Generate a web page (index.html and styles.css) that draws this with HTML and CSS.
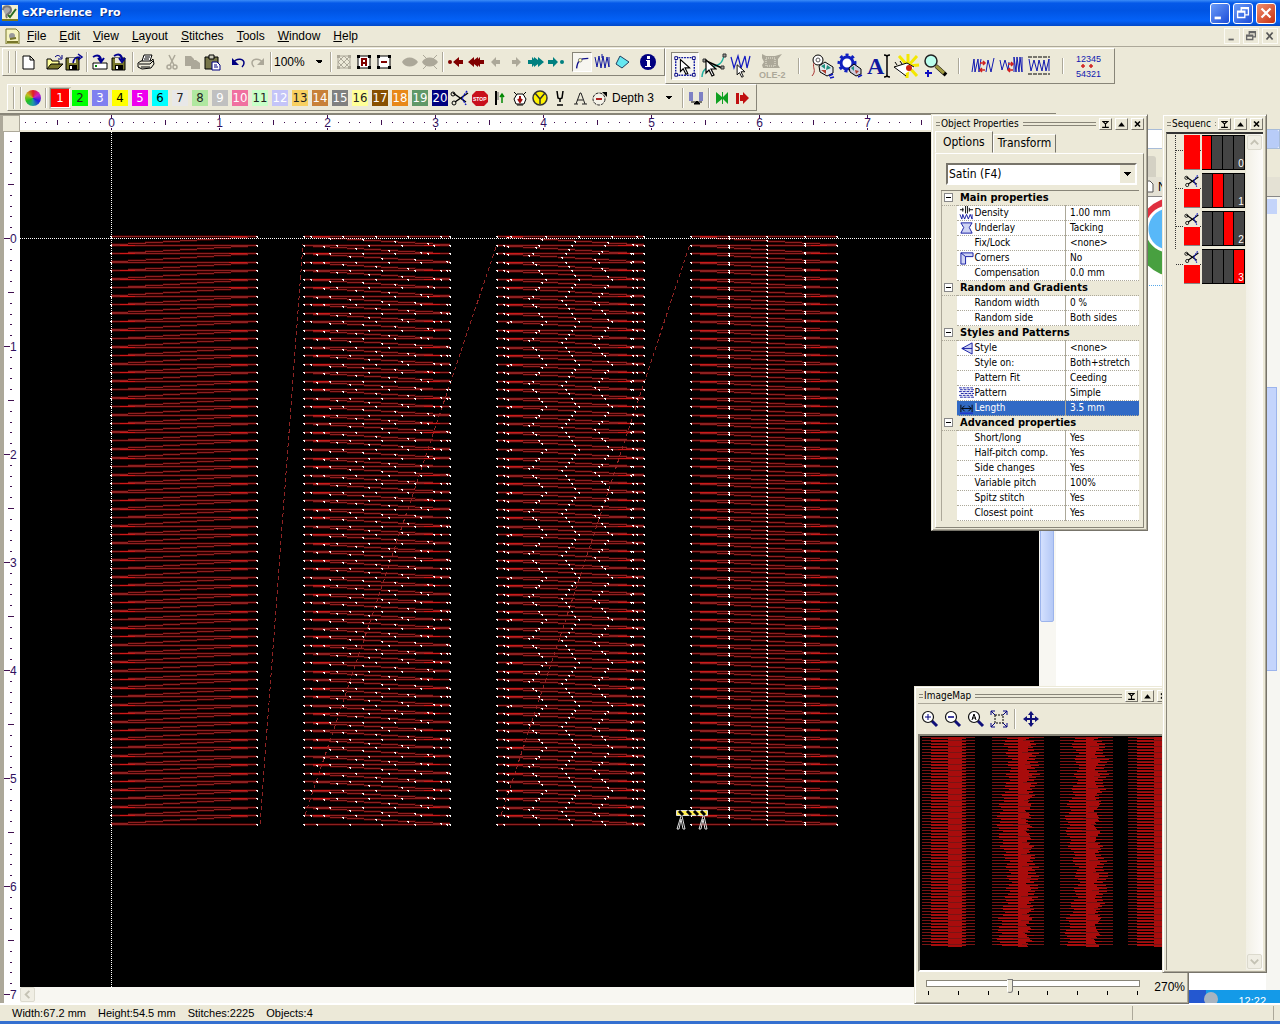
FILE: index.html
```
<!DOCTYPE html>
<html lang="en">
<head>
<meta charset="utf-8">
<title>eXPerience Pro</title>
<link rel="stylesheet" href="styles.css">
</head>
<body>
<svg class="defs" aria-hidden="true">
  <defs>
    <symbol id="disk" viewBox="0 0 20 20"><path d="M2 6h13v12H2z" fill="#77762a" stroke="#000"/><path d="M5 6h7v5H5z" fill="#ece9d8"/><path d="M5 13h8v5H5z" fill="#000"/><path d="M6 14h2v3H6z" fill="#fff"/></symbol>
    <symbol id="scissors" viewBox="0 0 20 20"><g fill="none" stroke="currentColor"><path d="M3 5l13 9M5 14L18 5" stroke-width="1.500"/><circle cx="3" cy="6" r="2"/><circle cx="4" cy="15" r="2"/></g><path d="M17 3l-5 7 4 7" stroke="#1018c0" fill="none" stroke-width="1.500" stroke-dasharray="2 1"/></symbol>
    <symbol id="glass" viewBox="0 0 20 20"><path d="M11 11l6 6" stroke="#10107a" stroke-width="3"/><circle cx="8" cy="8" r="5.500" fill="#fff" stroke="#111" stroke-width="1.200"/></symbol>
    <symbol id="cursor" viewBox="0 0 12 18"><path d="M1 1v13l3-3 3 6 2-1-3-6h5z" fill="#fff" stroke="#000" stroke-width="1.200"/></symbol>
    <symbol id="pin" viewBox="0 0 12 12"><path d="M2 3h8M2 10h8M3 3l3 3 3-3M6 6v4" stroke="#000" fill="none" stroke-width="1.300"/></symbol>
    <symbol id="up" viewBox="0 0 12 12"><path d="M2 9h8L6 4z"/></symbol>
    <symbol id="x" viewBox="0 0 12 12"><path d="M3 3l6 6M9 3l-6 6" stroke="#000" stroke-width="2"/></symbol>
    <symbol id="arrow" viewBox="0 0 20 20"><path d="M5 10l5-5v3h4v4h-4v3z" fill="currentColor"/></symbol>
    <symbol id="rewind" viewBox="0 0 20 20"><path d="M2 10l6-5v3l4-3v3h5v4h-5v3l-4-3v3z" fill="currentColor"/><path d="M9 10l5-5v3h4v4h-4v3z" fill="currentColor"/></symbol>
    <symbol id="end" viewBox="0 0 20 20"><path d="M7 10l6-5v3h4v4h-4v3z" fill="currentColor"/><circle cx="4" cy="10" r="2" fill="currentColor"/></symbol>
  </defs>
</svg>
<div class="app">
  <header class="titlebar">
    <svg class="ico16" viewBox="0 0 16 16"><path d="M0 0h16v16H0z" fill="#f2f0d0"/><path d="M1 5c0-5 8-5 8 0s-7 3-4 8" fill="#aaa" stroke="#777" stroke-width="2"/><path d="M6 10l2 2 6-8" stroke="#286a20" stroke-width="2" fill="none"/><path d="M0 15h16" stroke="#777720" stroke-width="2"/></svg>
    <h1>eXPerience&nbsp; Pro</h1>
    <div class="winbtns">
      <button aria-label="Minimize"><svg viewBox="0 0 20 20"><path d="M4 14h7v3H4z" fill="#fff"/></svg></button>
      <button aria-label="Restore"><svg viewBox="0 0 20 20" fill="none" stroke="#fff"><path d="M8 8V4h8v8h-4M8 5h8M4 8h8v7H4zM4 9h8" stroke-width="1.500"/></svg></button>
      <button class="close" aria-label="Close"><svg viewBox="0 0 20 20"><path d="M5 5l10 10M15 5L5 15" stroke="#fff" stroke-width="2.500"/></svg></button>
    </div>
  </header>
  <nav class="menubar">
    <svg class="ico16" viewBox="0 0 16 16"><path d="M2 1h10l3 3v12H2z" fill="#f6f4c0" stroke="#77762a"/><circle cx="8" cy="8" r="3" fill="#999"/><path d="M6 11l6-1M3 14h11" stroke="#77762a" stroke-width="2"/></svg>
    <a href="#"><u>F</u>ile</a><a href="#"><u>E</u>dit</a><a href="#"><u>V</u>iew</a><a href="#"><u>L</u>ayout</a><a href="#"><u>S</u>titches</a><a href="#"><u>T</u>ools</a><a href="#"><u>W</u>indow</a><a href="#"><u>H</u>elp</a>
    <div class="mdi">
      <button aria-label="Minimize document"><svg viewBox="0 0 16 16"><path d="M4 11h6v2H4z" fill="#666"/></svg></button>
      <button aria-label="Restore document"><svg viewBox="0 0 16 16"><path d="M6 6V3h7v6h-3M6 4h7M3 7h7v5H3zM3 8h7" fill="none" stroke="#666" stroke-width="1.500"/></svg></button>
      <button aria-label="Close document"><svg viewBox="0 0 16 16"><path d="M4 4l7 8M11 4l-7 8" stroke="#555" stroke-width="2"/></svg></button>
    </div>
  </nav>
  <div class="dock">
    <div class="toolbar main">
      <i class="grip"></i>
      <button aria-label="New"><svg viewBox="0 0 20 20"><path d="M5 4h7l4 4v9H5zM12 4v4h4" fill="#fff" stroke="#000"/></svg></button><i class="gap"></i>
      <button aria-label="Open"><svg viewBox="0 0 20 20"><path d="M3 17V7h4l1 2h7v3" fill="#ffff9a" stroke="#000"/><path d="M3 17l4-5h12l-5 5z" fill="#77762a" stroke="#000"/><path d="M11 5c3-3 5-1 6 1M18 3v4h-4" fill="none" stroke="#000080"/></svg></button>
      <button aria-label="Save"><svg viewBox="0 0 20 20"><use href="#disk" width="20" height="20"/><path d="M9 11c1-5 3-6 7-6M14 2l4 3-4 3" fill="none" stroke="#000090" stroke-width="1.500"/></svg></button><i class="sep"></i>
      <button aria-label="Import"><svg viewBox="0 0 20 20"><path d="M3 11h14v6H3z" fill="#fff" stroke="#000"/><path d="M5 13h2v2H5z" fill="#080"/><path d="M3 5c5-3 8-1 8 4M8 6l3 4 3-4" fill="none" stroke="#000090" stroke-width="2"/></svg></button>
      <button aria-label="Export"><svg viewBox="0 0 20 20"><use href="#disk" width="20" height="20"/><path d="M4 4c5-3 8-1 8 4M9 6l3 4 3-4" fill="none" stroke="#000090" stroke-width="2"/></svg></button><i class="sep"></i>
      <button aria-label="Print"><svg viewBox="0 0 20 20"><path d="M6 9l2-6h8l-2 6" fill="#fff" stroke="#000"/><path d="M2 11l3-2h10l2-2 1 5-3 4-9 1-4-2z" fill="#ece9d8" stroke="#000"/><path d="M3 12h11l3-3M5 15h9M9 5h5M8 7h5" fill="none" stroke="#000"/></svg></button><i class="gap"></i>
      <button aria-label="Cut" class="off"><svg viewBox="0 0 20 20"><path d="M7 3l5 10M13 3L8 13" stroke="currentColor" stroke-width="1.500"/><g fill="none" stroke="currentColor" stroke-width="1.500"><circle cx="7" cy="15" r="2"/><circle cx="13" cy="15" r="2"/></g></svg></button>
      <button aria-label="Copy" class="off"><svg viewBox="0 0 20 20" fill="currentColor"><path d="M3 4h6l3 3v7H3z"/><path d="M9 8h5l4 3v6H9z"/></svg></button>
      <button aria-label="Paste"><svg viewBox="0 0 20 20"><path d="M3 5h13v12H3z" fill="#77764a" stroke="#000"/><path d="M7 3h5v4H7z" fill="#ccb" stroke="#000"/><path d="M10 10h5l3 3v5h-8z" fill="#fff" stroke="#000080"/><path d="M12 13h3M12 15h4" stroke="#000080"/></svg></button><i class="gap"></i>
      <button aria-label="Undo"><svg viewBox="0 0 20 20"><path d="M5 11c4-6 11-4 11 0 0 2-1 3-2 4" fill="none" stroke="#000080" stroke-width="1.500"/><path d="M4 6v7h7z" fill="#000080"/></svg></button>
      <button aria-label="Redo" class="off"><svg viewBox="0 0 20 20"><path d="M15 11C11 5 4 7 4 11c0 2 1 3 2 4" fill="none" stroke="currentColor" stroke-width="1.500"/><path d="M16 6v7H9z" fill="currentColor"/></svg></button><i class="sep"></i>
      <select class="zoom" aria-label="Zoom"><option>100%</option></select><i class="sep"></i>
      <button aria-label="Hide" class="off"><svg viewBox="0 0 20 20"><path d="M4 4h12v12H4zM4 4l12 12M16 4L4 16M10 4l6 6-6 6-6-6z" fill="none" stroke="currentColor"/><path d="M3 3h3v3H3zM14 3h3v3h-3zM3 14h3v3H3zM14 14h3v3h-3z" fill="currentColor"/></svg></button>
      <button aria-label="All"><svg viewBox="0 0 20 20"><path d="M4 4h12v12H4z" fill="#fff" stroke="#000"/><path d="M3 3h3v3H3zM14 3h3v3h-3zM3 14h3v3H3zM14 14h3v3h-3z"/><path d="M8 14V7h4v7M8 11h4" fill="none" stroke="#800000" stroke-width="2"/></svg></button>
      <button aria-label="Collapse"><svg viewBox="0 0 20 20"><path d="M4 4h12v12H4z" fill="#fff" stroke="#000"/><path d="M3 3h3v3H3zM14 3h3v3h-3zM3 14h3v3H3zM14 14h3v3h-3z"/><path d="M7 10h6" stroke="#800000" stroke-width="2"/></svg></button><i class="gap"></i>
      <button aria-label="View object" class="off"><svg viewBox="0 0 20 20" fill="currentColor"><path d="M2 10c3-6 12-6 16 0-4 6-13 6-16 0z"/></svg></button>
      <button aria-label="Hide object" class="off"><svg viewBox="0 0 20 20" fill="currentColor"><path d="M2 10c3-6 12-6 16 0-4 6-13 6-16 0z"/><path d="M3 3l14 14M17 3L3 17" stroke="currentColor"/></svg></button><i class="sep"></i>
      <button aria-label="First" class="maroon"><svg><use href="#end"/></svg></button>
      <button aria-label="Back" class="maroon"><svg><use href="#rewind"/></svg></button>
      <button aria-label="Previous" class="off"><svg><use href="#arrow"/></svg></button>
      <button aria-label="Next" class="off flip"><svg><use href="#arrow"/></svg></button>
      <button aria-label="Forward" class="teal flip"><svg><use href="#rewind"/></svg></button>
      <button aria-label="Last" class="teal"><svg viewBox="0 0 20 20"><path d="M12 10L7 5v3H2v4h5v3z" fill="currentColor"/><circle cx="16" cy="10" r="2" fill="currentColor"/></svg></button><i class="gap"></i>
      <button aria-label="Outline" class="on"><svg viewBox="0 0 20 20"><path d="M4 17C5 9 7 6 17 6" fill="none" stroke="#10108a" stroke-width="1.500"/><circle cx="8" cy="8" r="2" fill="#ffb" stroke="#777"/></svg></button>
      <button aria-label="Stitches"><svg viewBox="0 0 20 20"><path d="M3 5l2 10L7 4l2 12 2-12 2 12 2-11 2 10V5M10 2v4" fill="none" stroke="#1018a0"/></svg></button>
      <button aria-label="Solid"><svg viewBox="0 0 20 20"><path d="M8 4l9 6-7 6-6-4z" fill="#66e8f0" stroke="#204060"/></svg></button><i class="gap"></i>
      <button aria-label="Information"><svg viewBox="0 0 20 20"><circle cx="10" cy="10" r="8" fill="#000080"/><path d="M9 4h3v3H9zM8 8h4v6h1v1H7v-1h2V9H8z" fill="#fff"/></svg></button>
    </div>
    <div class="toolbar big">
      <button aria-label="Select" class="on"><svg viewBox="0 0 28 28"><path d="M4 5h20v19H4z" fill="none" stroke="#1018a0" stroke-width="1.500" stroke-dasharray="2 1"/><path d="M3 4h3v3H3zM22 4h3v3h-3zM3 22h3v3H3zM22 22h3v3h-3z" fill="#fff" stroke="#000080"/><use href="#cursor" x="8" y="6" width="12" height="18"/></svg></button>
      <button aria-label="Edit points"><svg viewBox="0 0 28 28"><path d="M3 25C4 8 22 22 25 3" fill="none" stroke="#20b0a0" stroke-width="1.500"/><path d="M5 8l18 8" stroke="#000" stroke-width="1.500"/><path d="M4 7h3v3H4zM22 14h3v3h-3zM24 2h3v3h-3z" fill="#999" stroke="#333"/><use href="#cursor" x="6" y="7" width="12" height="18"/></svg></button>
      <button aria-label="Edit stitches"><svg viewBox="0 0 28 28"><path d="M4 5l3 11L11 4l3 12 4-12 2 12 3-12" fill="none" stroke="#1018c0" stroke-width="1.200"/><use href="#cursor" x="8" y="12" width="12" height="14"/></svg></button>
      <button aria-label="OLE" class="off wide"><svg viewBox="0 0 28 28"><path d="M4 2l4 2h9l7-2-4 5v6l2 3H5l-1-3 2-3-2-4z" fill="currentColor"/><path d="M8 6h9v8H8z" fill="none" stroke="#ece9d8" stroke-dasharray="1 1"/><text x="1" y="26" class="ole">OLE-2</text></svg></button>
      <i class="sep"></i>
      <button aria-label="Thread"><svg viewBox="0 0 28 28"><circle cx="9" cy="8" r="5" fill="#fff" stroke="#000"/><circle cx="9" cy="8" r="2" fill="none" stroke="#555"/><path d="M5 11c-2 5 3 7-2 13" fill="none" stroke="#a33"/><path d="M10 14l6-4 8 5v6l-6 3-7-4z" fill="#e4e8ec" stroke="#000"/><path d="M12 14l4-2v5zM18 13l4 3-5 2z" fill="#209080"/><path d="M12 18l5 4v-4z" fill="#b04030"/><path d="M20 24l4-2M21 26l4-1" stroke="#1018c0" stroke-width="1.500"/></svg></button>
      <button aria-label="Process"><svg viewBox="0 0 28 28"><circle cx="10" cy="11" r="8" fill="none" stroke="#1020c0" stroke-width="3" stroke-dasharray="3 3"/><circle cx="10" cy="11" r="6" fill="#fff" stroke="#1020c0" stroke-width="3"/><path d="M12 16l5-4 7 5v5l-5 2-6-4z" fill="#ccd" stroke="#000"/><path d="M14 16l3-2v5z" fill="#209080"/><path d="M18 18l4 1-3 3z" fill="#b04030"/><path d="M21 25l4-2" stroke="#1018c0" stroke-width="1.500"/></svg></button>
      <button aria-label="Text"><svg viewBox="0 0 28 28"><text x="2" y="22" class="bigA">A</text><path d="M19 3c3 0 3 1 3 3 0-2 0-3 3-3M22 5v18M19 25c3 0 3-1 3-3 0 2 0 3 3 3" fill="none" stroke="#000" stroke-width="1.500"/></svg></button>
      <button aria-label="Wizard"><svg viewBox="0 0 28 28"><path d="M15 14L6 4M15 14V2M15 14l9-10M15 14l11-1M15 14l9 10M15 14l-1 12" stroke="#f4e800" stroke-width="3"/><path d="M2 16l12-5 8 4-7 5-6 3z" fill="#fff"/><path d="M1 15l13-4 7 4M1 15l12 9M4 13L2 10M9 12L7 9" fill="none" stroke="#000"/><circle cx="16" cy="16" r="3" fill="#d02010"/></svg></button>
      <button aria-label="Magnify"><svg viewBox="0 0 28 28"><path d="M15 14l10 9" stroke="#000" stroke-width="4"/><path d="M15 14l8 7" stroke="#a09a40" stroke-width="3"/><circle cx="10" cy="9" r="6" fill="#bfe" stroke="#222" stroke-width="1.500"/><path d="M4 21h7M7 18v7" stroke="#1010c0" stroke-width="2"/></svg></button>
      <i class="sep"></i>
      <button aria-label="Density up"><svg viewBox="0 0 28 28"><path d="M3 20L5 7l1 13L9 7l1 13L12 7M17 20l2-12 3 12 3-14" fill="none" stroke="#1018b0"/><path d="M11 11h5M11 18h5M14 9l2 2-2 2M13 16l-2 2 2 2" fill="none" stroke="#d02020" stroke-width="1.500"/></svg></button>
      <button aria-label="Density down"><svg viewBox="0 0 28 28"><path d="M3 8l2 10 3-10 3 10 1-8M17 20V5l2 15 1-15 2 15 1-15 2 15V5" fill="none" stroke="#1018b0"/><path d="M11 12h5M11 18h5M14 10l2 2-2 2M13 16l-2 2 2 2" fill="none" stroke="#d02020" stroke-width="1.500"/></svg></button>
      <button aria-label="Width"><svg viewBox="0 0 28 28"><path d="M3 5h22M3 22h22" stroke="#000" stroke-dasharray="4 1"/><path d="M4 7l2 12 3-11 3 11L14 8l3 11 2-11 2 11 3-12v12" fill="none" stroke="#1018b0"/></svg></button>
      <i class="sep"></i>
      <button aria-label="Reverse order"><svg viewBox="0 0 28 28"><text x="3" y="10" class="num">12345</text><text x="3" y="25" class="num">54321</text><path d="M10 12v4M18 12v4M8 14h4M16 14h4" stroke="#d02020" stroke-width="1.500"/></svg></button>
    </div>
    <div class="toolbar colors">
      <i class="grip"></i>
      <button aria-label="Palette"><span class="wheel"></span></button><i class="sep"></i>
      <div class="swatches" id="swatches"></div>
      <button aria-label="Trim"><svg><use href="#scissors"/></svg></button>
      <button aria-label="Stop"><svg viewBox="0 0 20 20"><path d="M6 3h8l4 4v7l-4 4H6l-4-4V7z" fill="#c8101c"/><text x="3" y="13" class="stop">STOP</text></svg></button>
      <button aria-label="Needle"><svg viewBox="0 0 20 20"><path d="M6 3v9M6 12v5" stroke="#000" stroke-width="2"/><path d="M8 4v8" stroke="#555"/><path d="M12 15V6M10 9l2-3 2 3" fill="none" stroke="#080" stroke-width="1.500"/></svg></button>
      <button aria-label="Down"><svg viewBox="0 0 20 20"><path d="M7 6h6l3 5-2 5H6l-2-5z" fill="#fff" stroke="#000"/><path d="M4 4l3 3M16 4l-3 3M7 17h6" stroke="#000"/><path d="M10 8v5M8 11l2 3 2-3" fill="none" stroke="#a01010" stroke-width="2"/></svg></button>
      <button aria-label="Timer"><svg viewBox="0 0 20 20"><circle cx="10" cy="10" r="7" fill="#fff200" stroke="#333" stroke-width="1.500"/><path d="M5 5l5 6 5-6M10 11v5" fill="none" stroke="#333" stroke-width="1.500"/></svg></button>
      <button aria-label="Pick"><svg viewBox="0 0 20 20"><path d="M7 3l1 7 2 1 2-1 1-7M10 10v4M7 17h6" fill="none" stroke="#000" stroke-width="1.500"/></svg></button>
      <button aria-label="Lettering"><svg viewBox="0 0 20 20"><path d="M4 16h4M12 16h5M6 16l4-11h1l4 11M7 12h6" fill="none" stroke="#222"/></svg></button>
      <button aria-label="Depth"><svg viewBox="0 0 20 20"><circle cx="9" cy="11" r="6" fill="#f4f2e8" stroke="#222" stroke-dasharray="3 1"/><path d="M6 11h6" stroke="#b02020" stroke-width="2"/><path d="M12 4h5v5z"/></svg></button>
      <select class="depth" aria-label="Depth"><option>Depth 3</option></select><i class="sep"></i>
      <button aria-label="Height"><svg viewBox="0 0 20 20"><path d="M4 4v9M6 4v9M14 4v9M16 4v9" stroke="#1018b0"/><path d="M5 14h11M8 16l3-3 3 3z" stroke="#000"/></svg></button><i class="sep"></i>
      <button aria-label="Play"><svg viewBox="0 0 20 20"><path d="M4 4l6 5V4h1v5l5-5v12l-5-5v5h-1v-5l-6 5z" fill="#10a020"/></svg></button>
      <button aria-label="Record"><svg viewBox="0 0 20 20"><path d="M4 5h3v11H4zM8 7h3V4l6 6-6 6v-3H8z" fill="#c01010"/></svg></button>
    </div>
  </div>
  <main class="work">
    <section class="document">
      <div class="corner"></div>
      <svg class="ruler-x" id="rulerX"></svg>
      <div class="track-top"></div>
      <svg class="ruler-y" id="rulerY"></svg>
      <svg class="canvas" id="canvas"></svg>
      <div class="vscroll"><span></span></div>
      <div class="hscroll"><button aria-label="Scroll left"><svg viewBox="0 0 14 14"><path d="M9 3L5 7l4 4" fill="none" stroke="#c4c2b4" stroke-width="2"/></svg></button></div>
    </section>
    <aside class="browser">
      <div class="b-top"></div><div class="b-addr"><span></span></div><div class="b-tabs"><i></i></div><div class="b-page"><svg viewBox="0 0 10 13"><path d="M1 1h5l3 3v8H1z" fill="#fff" stroke="#555"/></svg>N</div>
      <div class="b-body"><div class="b-pic"><i></i></div><div class="b-rest"></div><div class="b-bar"><span></span></div></div>
      <div class="taskbar"><i></i><span>12:22</span></div>
    </aside>
  </main>
  <footer class="status"><span>Width:67.2&nbsp;mm</span><span>Height:54.5&nbsp;mm</span><span>Stitches:2225</span><span>Objects:4</span><i></i></footer>
</div>

<section class="panel props">
  <header><h2>Object Properties</h2><i></i><button aria-label="Pin"><svg><use href="#pin"/></svg></button><button aria-label="Roll up"><svg><use href="#up"/></svg></button><button aria-label="Close"><svg><use href="#x"/></svg></button></header>
  <div class="tabs"><button class="active">Options</button><button>Transform</button></div>
  <div class="tabbody">
    <select class="kind" aria-label="Stitch type"><option>Satin (F4)</option></select>
    <table>
      <colgroup><col class="c1"><col class="c2"><col></colgroup>
      <tbody><tr class="group"><th colspan="3"><b></b>Main properties</th></tr>
      <tr><td></td><td><svg viewBox="0 0 16 15"><path d="M1 4h4M4 2v4M7 0v8M9 0v8M11 2v4M11 4h4" stroke="#000"/><path d="M1 9l2 5 1-5 2 5 2-5 2 5 2-5 2 5V9" fill="none" stroke="#1018a0"/></svg>Density</td><td>1.00 mm</td></tr>
      <tr><td></td><td><svg viewBox="0 0 16 15"><path d="M2 2h12l-3 5 3 6H2l3-6z" fill="#cfd4f4" stroke="#1018a0"/></svg>Underlay</td><td>Tacking</td></tr>
      <tr><td></td><td><svg></svg>Fix/Lock</td><td>&lt;none&gt;</td></tr>
      <tr><td></td><td><svg viewBox="0 0 16 15"><path d="M2 2h13v4H7v8H2zM2 2l5 4" fill="#cfd4f4" stroke="#1018a0"/></svg>Corners</td><td>No</td></tr>
      <tr><td></td><td><svg></svg>Compensation</td><td>0.0 mm</td></tr></tbody>
      <tbody><tr class="group"><th colspan="3"><b></b>Random and Gradients</th></tr>
      <tr><td></td><td><svg></svg>Random width</td><td>0 %</td></tr>
      <tr><td></td><td><svg></svg>Random side</td><td>Both sides</td></tr></tbody>
      <tbody><tr class="group"><th colspan="3"><b></b>Styles and Patterns</th></tr>
      <tr><td></td><td><svg viewBox="0 0 16 15"><path d="M3 8l11-6v12zM3 8h11" fill="#cfd4f4" stroke="#1018a0"/></svg>Style</td><td>&lt;none&gt;</td></tr>
      <tr><td></td><td><svg></svg>Style on:</td><td>Both+stretch</td></tr>
      <tr><td></td><td><svg></svg>Pattern Fit</td><td>Ceeding</td></tr>
      <tr><td></td><td><svg viewBox="0 0 16 15"><path d="M0 2h16M1 4h15M0 6h16M2 8h14M0 10h16M1 12h15" stroke="#1018a0" stroke-dasharray="3 1"/></svg>Pattern</td><td>Simple</td></tr>
      <tr class="sel"><td></td><td><svg viewBox="0 0 16 15"><path d="M2 4v8M14 4v8M3 8h10M6 5L3 8l3 3M10 5l3 3-3 3" fill="none" stroke="#000"/><path d="M1 13h14" stroke="#1018d0"/></svg>Length</td><td>3.5 mm</td></tr></tbody>
      <tbody><tr class="group"><th colspan="3"><b></b>Advanced properties</th></tr>
      <tr><td></td><td><svg></svg>Short/long</td><td>Yes</td></tr>
      <tr><td></td><td><svg></svg>Half-pitch comp.</td><td>Yes</td></tr>
      <tr><td></td><td><svg></svg>Side changes</td><td>Yes</td></tr>
      <tr><td></td><td><svg></svg>Variable pitch</td><td>100%</td></tr>
      <tr><td></td><td><svg></svg>Spitz stitch</td><td>Yes</td></tr>
      <tr><td></td><td><svg></svg>Closest point</td><td>Yes</td></tr></tbody>
    </table>
  </div>
</section>

<section class="panel map">
  <header><h2>ImageMap</h2><i></i><button aria-label="Pin"><svg><use href="#pin"/></svg></button><button aria-label="Roll up"><svg><use href="#up"/></svg></button><button aria-label="Close"><svg><use href="#x"/></svg></button></header>
  <div class="maptools">
    <button aria-label="Zoom in"><svg viewBox="0 0 20 20"><use href="#glass" width="20" height="20"/><path d="M5 8h6M8 5v6" stroke="#000080"/></svg></button>
    <button aria-label="Zoom out"><svg viewBox="0 0 20 20"><use href="#glass" width="20" height="20"/><path d="M5 8h6" stroke="#000080" stroke-width="1.500"/></svg></button>
    <button aria-label="Zoom all"><svg viewBox="0 0 20 20"><use href="#glass" width="20" height="20"/><path d="M6 11l2-6 2 6M6 9h4" fill="none" stroke="#000"/></svg></button>
    <button aria-label="Fit"><svg viewBox="0 0 20 20"><path d="M6 6h8v8H6z" fill="none" stroke="#000" stroke-dasharray="2 1"/><path d="M2 6V2h4M14 2h4v4M18 14v4h-4M6 18H2v-4M2 2l4 4M18 2l-4 4M18 18l-4-4M2 18l4-4" fill="none" stroke="#000080"/></svg></button>
    <i class="sep"></i>
    <button aria-label="Pan"><svg viewBox="0 0 20 20"><path d="M10 2l3 4h-2v3h3V7l4 3-4 3v-2h-3v3h2l-3 4-3-4h2v-3H6v2l-4-3 4-3v2h3V6H7z" fill="#10107a"/></svg></button>
  </div>
  <svg class="mapview" id="mapview"></svg>
  <div class="mapzoom"><div><input type="range" min="0" max="100" value="39" aria-label="Map zoom"><div class="ticks"><i></i><i></i><i></i><i></i><i></i><i></i><i></i><i></i></div></div><output>270%</output></div>
</section>

<section class="panel seq">
  <header><h2>Sequenc</h2><i></i><button aria-label="Pin"><svg><use href="#pin"/></svg></button><button aria-label="Roll up"><svg><use href="#up"/></svg></button><button aria-label="Close"><svg><use href="#x"/></svg></button></header>
  <div class="seqbody">
    <ol>
      <li class="first"><span></span><i class="r"></i><i></i><i></i><i>0</i></li>
      <li><span><svg><use href="#scissors"/></svg></span><i></i><i class="r"></i><i></i><i>1</i></li>
      <li><span><svg><use href="#scissors"/></svg></span><i></i><i></i><i class="r"></i><i>2</i></li>
      <li><span><svg><use href="#scissors"/></svg></span><i></i><i></i><i></i><i class="r">3</i></li>
    </ol>
    <div class="seqscroll"><button aria-label="Up"><svg viewBox="0 0 14 14"><path d="M3 9l4-4 4 4" fill="none" stroke="#c4c2b4" stroke-width="2"/></svg></button><button aria-label="Down"><svg viewBox="0 0 14 14"><path d="M3 5l4 4 4-4" fill="none" stroke="#c4c2b4" stroke-width="2"/></svg></button></div>
  </div>
</section>
<script src="app.js"></script>
</body>
</html>
```
FILE: styles.css
```
* { box-sizing: border-box; }
body { margin: 0; background: #ece9d8; color: #000; font: 12px/14px "Liberation Sans", Arial, sans-serif; overflow: hidden; position: relative; }
button, select, input { font: inherit; color: inherit; margin: 0; padding: 0; border: 0; background: none; border-radius: 0; }
h1, h2, ol { margin: 0; padding: 0; }
svg { display: block; }
.defs { position: absolute; width: 0; height: 0; }
.app { display: flex; flex-direction: column; height: 100vh; }

.titlebar { display: flex; align-items: center; height: 26px; padding: 0 4px 0 2px; background: linear-gradient(#3a8cf8, #0458e8 12%, #0054e3 40%, #0462f8 80%, #0248c8); }
.titlebar h1 { flex: 1; margin-left: 4px; color: #fff; font: bold 11px/14px "DejaVu Sans", Verdana, sans-serif; text-shadow: 1px 1px #0a2a80; }
.ico16 { width: 16px; height: 16px; }
.winbtns { display: flex; gap: 3px; }
.winbtns button { width: 20px; height: 21px; border: 1px solid #fff; border-radius: 3px; background: linear-gradient(135deg, #6a9cf8, #1c4cd8); }
.winbtns .close { background: linear-gradient(135deg, #f09070, #c83010); }

.menubar { display: flex; align-items: center; height: 20px; padding: 0 2px 0 4px; }
.menubar a { padding: 0 6px 0 7px; color: #000; text-decoration: none; line-height: 18px; }
.menubar .mdi { display: flex; gap: 3px; margin-left: auto; }
.menubar .mdi button { width: 16px; height: 16px; border: 1px solid #fbfaf4; }

.dock { display: flex; flex-wrap: wrap; align-items: flex-start; align-content: flex-start; height: 67px; border-top: 1px solid #aca899; padding: 1px 0 0 2px; }
.toolbar { display: flex; align-items: center; height: 28px; border: 1px solid #fff; border-right-color: #888578; border-bottom-color: #888578; }
.toolbar button { flex: none; width: 20px; height: 20px; }
.toolbar svg { width: 100%; height: 100%; }
.grip { width: 8px; height: 22px; margin: 0 2px 0 5px; border: solid #aca899; border-width: 0 1px; box-shadow: inset 1px 0 #fff, 1px 0 #fff; }
.gap { width: 6px; }
.sep { width: 2px; height: 20px; margin: 0 2px; border-left: 1px solid #aca899; border-right: 1px solid #fff; }
.toolbar .on { background: #f7f6f0; border: 1px solid; border-color: #888578 #fff #fff #888578; }
.off { color: #aca899; }
.maroon { color: #800000; }
.teal { color: #008080; }
.flip svg { transform: scaleX(-1); }
.main { width: 663px; }
.big { width: 450px; height: 36px; padding-left: 5px; }
.big button { width: 28px; height: 28px; }
.big .wide { width: 34px; }
.big .sep { height: 16px; margin: 0 9px; }
.ole { font: bold 9px "Liberation Sans", sans-serif; fill: currentColor; }
.bigA { font: bold 24px "Liberation Serif", serif; fill: #1018a0; }
.num { font: 9px "Liberation Sans", sans-serif; fill: #1018b0; }
.stop { font: bold 5px "Liberation Sans", sans-serif; fill: #fff; }
select { appearance: none; }
.zoom, .depth, .kind { background-image: linear-gradient(to bottom left, #000 50%, transparent 50%), linear-gradient(to bottom right, #000 50%, transparent 50%); background-size: 4px 4px; background-repeat: no-repeat; }
.zoom { width: 54px; height: 20px; background-position: 41px 8px, 45px 8px; }
.depth { width: 70px; height: 20px; padding-left: 2px; background-position: 55px 8px, 59px 8px; }
.colors { width: 750px; height: 27px; margin-left: 5px; }
.wheel { display: block; width: 16px; height: 16px; margin: 2px; border-radius: 50%; background: conic-gradient(#e02020, #d020c0, #2020e0, #20a0a0, #20c020, #c0c020, #e02020); }
.swatches { display: flex; margin-left: 1px; }
.toolbar .swatches button { border: 2px solid #ece9d8; font: 13px/16px "DejaVu Sans Condensed", Tahoma, sans-serif; text-align: center; white-space: nowrap; }
.toolbar .swatches button:first-child { border: 1px solid; border-color: #888578 #fff #fff #888578; outline: 1px solid #c8c5b6; }

.work { display: flex; flex: 1; min-height: 0; }
.document { flex: 1; display: grid; grid-template: 17px 1fr 16px / 20px 1fr 17px; min-width: 0; border-top: 2px solid #888578; }
.document > * { min-width: 0; min-height: 0; }
.corner { border: solid #aca899; border-width: 1px 1px 1px 3px; }
.ruler-x { width: 100%; height: 15px; background: #fff; }
.track-top { background: #fff; }
.ruler-y { grid-row: 2 / 4; width: 100%; height: 100%; background: #fff; border: solid #aca899; border-width: 0 0 0 4px; }
.ruler-x line, .ruler-y line { stroke: #401050; shape-rendering: crispEdges; }
.ruler-x text, .ruler-y text { font: 12px "Liberation Sans", sans-serif; fill: #301060; }
.canvas { width: 100%; height: 100%; background: #000; }
.vscroll { grid-row: span 2; background: #f8f7f2; padding: 0 2px 0 1px; }
.vscroll span { display: block; height: 490px; border: 1px solid #9cb4ec; border-radius: 2px; background: linear-gradient(90deg, #d4e0fe, #b4c8f6); }
.hscroll { background: #f8f7f2; }
.hscroll button, .seqscroll button { width: 15px; height: 15px; border: 1px solid #dcdace; border-radius: 2px; background: #f0eee4; }

.browser { display: flex; flex-direction: column; width: 224px; background: #fff; }
.b-top { height: 16px; background: #ece9d8; }
.b-addr { display: flex; justify-content: flex-end; height: 20px; border: 1px solid #a8bcd8; }
.b-addr span { width: 14px; background: #b8ccf8; border-radius: 2px; }
.b-tabs { height: 28px; background: #ece9d8; padding: 7px 0 0; }
.b-tabs i { display: block; width: 100px; height: 21px; background: #d4d1c4; border-radius: 0 3px 0 0; }
.b-page { display: flex; align-items: center; height: 20px; padding-left: 88px; gap: 4px; background: #e4e1d4; border-bottom: 1px solid #888; }
.b-page svg { width: 10px; height: 13px; }
.b-body { flex: 1; display: grid; grid-template: 89px 1fr / 1fr 14px; }
.b-pic { overflow: hidden; border-bottom: 1px dotted #58a8e8; }
.b-pic i { display: block; width: 80px; height: 80px; margin-left: 80px; border-radius: 50%; background: radial-gradient(circle at 33px 32px, #58b8f8 0 20px, #fff 21px 23px, transparent 24px), conic-gradient(from 0deg, #e03040 0 25%, #f4c820 25% 56%, #48a040 56% 78%, #e03040 78%); }
.b-bar { grid-column: 2; grid-row: 1 / 3; padding: 190px 3px 0 0; background: #f6f6f2 linear-gradient(#c4d4fa, #c4d4fa) 0 2px / 11px 15px no-repeat; }
.b-bar span { display: block; height: 284px; border: 1px solid #9cb4ec; background: #c4d4fc; }
.taskbar { display: flex; justify-content: flex-end; gap: 20px; height: 13px; padding-right: 14px; overflow: hidden; background: linear-gradient(90deg, #2458d0 150px, #149ae8 150px); color: #fff; font-size: 11px; line-height: 22px; }
.taskbar i { width: 14px; height: 14px; margin-top: 2px; border-radius: 50%; background: #a8b4c0; }
.status { display: flex; align-items: center; height: 21px; padding-left: 12px; gap: 12px; border-top: 2px solid #fff; border-bottom: 3px solid #3470d0; font-size: 11px; }
.status i { width: 142px; height: 14px; margin: 0 6px 0 auto; border: solid #aca899; border-width: 0 1px; }

.panel { position: absolute; display: flex; flex-direction: column; background: #ece9d8; border: 1px solid; border-color: #ece9d8 #77746a #77746a #ece9d8; box-shadow: inset 1px 1px #fff, inset -1px -1px #aca899; padding: 2px 3px; }
.panel header { display: flex; align-items: center; height: 14px; padding-left: 6px; background: linear-gradient(#888578, #888578) 1px 5px / 4px 1px no-repeat, linear-gradient(#888578, #888578) 1px 8px / 4px 1px no-repeat; }
.panel h2 { font: 10px/14px "DejaVu Sans Condensed", Tahoma, sans-serif; }
.panel header i { flex: 1; height: 4px; margin-left: 4px; border: solid #888578; border-width: 1px 0; }
.panel header button { width: 13px; height: 12px; margin-left: 3px; border: 1px solid; border-color: #fff #77746a #77746a #fff; }
.panel header svg { width: 100%; height: 100%; }

.props { left: 931px; top: 114px; width: 217px; height: 417px; }
.tabs { display: flex; align-items: flex-end; height: 22px; }
.tabs button { height: 19px; padding: 0 4px; border: 1px solid; border-color: #fff #77746a transparent #fff; font: 12px/17px "DejaVu Sans Condensed", Tahoma, sans-serif; }
.tabs .active { height: 22px; padding: 0 7px; }
.tabbody { flex: 1; padding: 8px 4px 4px 5px; border: 1px solid; border-color: #fff #888578 #888578 #fff; }
.kind { display: block; width: 191px; height: 22px; margin: 1px 0 5px 5px; padding-left: 1px; border: 2px solid; border-color: #77746a #fff #fff #77746a; font: 12px/16px "DejaVu Sans Condensed", Tahoma, sans-serif; background-color: #fff; background-image: linear-gradient(to bottom left, #000 50%, transparent 50%), linear-gradient(to bottom right, #000 50%, transparent 50%), linear-gradient(#ece9d8, #ece9d8); background-position: 176px 7px, 180px 7px, 172px 0; background-size: 4px 4px, 4px 4px, 15px 18px; }
table { width: 100%; border-collapse: collapse; table-layout: fixed; border-top: 1px solid #888578; border-left: 1px solid #aca899; font: 10px/14px "DejaVu Sans Condensed", Tahoma, sans-serif; }
.c1 { width: 15px; }
.c2 { width: 109px; }
tr { height: 15px; }
th, td { padding: 0; height: 15px; white-space: nowrap; text-align: left; }
th { font-size: 11px; border-bottom: 1px dotted #aca899; }
th b { display: inline-block; width: 9px; height: 9px; margin: 0 7px 0 2px; border: 1px solid #888; background: linear-gradient(#000, #000) 1px 3px / 5px 1px no-repeat #fff; vertical-align: -1px; }
td { border-bottom: 1px dotted #aca899; background: #fff; }
td:first-child { background: #ece9d8; border: 0; }
td:nth-child(2) { border-right: 1px solid #aca899; }
td:nth-child(3) { padding-left: 4px; }
td svg { display: inline-block; width: 15px; height: 14px; margin: 0 1px 0 2px; vertical-align: top; }
.sel td:not(:first-child) { background: #316ac5; color: #fff; }

.map { left: 914px; top: 686px; width: 275px; height: 318px; }
.map header { width: 252px; }
.maptools { display: flex; align-items: center; height: 30px; margin-bottom: 1px; padding-left: 2px; border-top: 1px solid #aca899; gap: 3px; }
.maptools button { width: 20px; height: 20px; }
.maptools svg { width: 20px; height: 20px; }
.maptools .sep { margin: 0 2px; }
.mapview { width: 100%; height: 238px; border: 2px solid #888578; border-right-color: #fff; border-bottom-color: #fff; background: #000; }
.mapzoom { display: flex; align-items: flex-start; justify-content: space-between; padding: 4px 0 0 8px; }
.mapzoom > div { width: 214px; }
.mapzoom output { padding-top: 4px; }
.mapzoom input { appearance: none; display: block; width: 214px; height: 14px; }
.mapzoom input::-webkit-slider-runnable-track { height: 7px; background: #fff; border: 1px solid #888578; }
.mapzoom input::-webkit-slider-thumb { appearance: none; width: 6px; height: 14px; margin-top: -2px; background: #ece9d8; border: 1px solid #777; border-left-color: #fff; border-radius: 0 0 3px 3px; }
.ticks { display: flex; justify-content: space-between; padding: 1px 2px; }
.ticks i { width: 1px; height: 4px; background: #000; }

.seq { left: 1162px; top: 114px; width: 105px; height: 859px; }
.seqbody { flex: 1; display: flex; justify-content: space-between; margin-top: 1px; border-top: 2px solid #333; border-left: 1px solid #888578; }
ol { list-style: none; padding: 1px 0 0 8px; }
li { display: flex; height: 38px; width: 70px; padding: 0 0 2px 8px; border-left: 1px dotted #333; background: linear-gradient(90deg, #333 1px, transparent 1px) 0 15px / 2px 1px repeat-x; background-size: 2px 1px; }
li:last-child { height: 36px; border-left-color: transparent; }
li span { width: 16px; height: 35px; margin-right: 2px; background: linear-gradient(#ece9d8 16px, #f00 16px); border-bottom: 1px solid #888; }
li.first span { background: #f00; }
li span svg { width: 16px; height: 16px; }
li i { width: 11px; height: 35px; background: #444; border: 1px solid #000; border-width: 1px 1px 1px 0; color: #fff; font: 10px/12px "Liberation Sans", sans-serif; padding: 22px 0 0 4px; }
li i.r { background: #f00; }
.seqscroll { display: flex; flex-direction: column; justify-content: space-between; width: 17px; padding: 1px; background: linear-gradient(90deg, #f2f0e6, #fdfcfa); }
```
FILE: app.js
```
const NS = 'http://www.w3.org/2000/svg';
function add(parent, name, attrs, text) {
  const el = document.createElementNS(NS, name);
  for (const key in attrs) el.setAttribute(key, attrs[key]);
  if (text !== undefined) el.textContent = text;
  parent.appendChild(el);
  return el;
}

// thread palette
const threads = [
  ['#ff0000', '#fff'], ['#00ff00', '#222'], ['#8080f0', '#fff'], ['#ffff00', '#000'], ['#ee00ee', '#fff'],
  ['#00ffff', '#000'], ['#e8e8e8', '#222'], ['#b0e8a0', '#222'], ['#c0c0c0', '#fff'], ['#f070a0', '#fff'],
  ['#c8ffc8', '#222'], ['#c4c4f8', '#fff'], ['#f8d060', '#222'], ['#c88038', '#fff'], ['#808080', '#fff'],
  ['#ffff98', '#222'], ['#885000', '#fff'], ['#e88818', '#fff'], ['#609868', '#fff'], ['#000080', '#fff']
];
const swatches = document.getElementById('swatches');
threads.forEach(([bg, fg], i) => {
  const b = document.createElement('button');
  b.textContent = i + 1;
  b.style.background = bg;
  b.style.color = fg;
  swatches.appendChild(b);
});

// rulers: 108px to the unit, ten divisions
const rx = document.getElementById('rulerX');
const ry = document.getElementById('rulerY');
for (let i = -9; i < 85; i++) {
  const x = Math.round(91 + i * 10.8) + 0.5;
  const y = Math.round(106 + i * 10.8) + 0.5;
  const major = i % 10 === 0, half = i % 5 === 0;
  if (major) {
    add(rx, 'line', { x1: x, x2: x, y1: 0, y2: 3 });
    add(rx, 'line', { x1: x, x2: x, y1: 13, y2: 15 });
    add(rx, 'text', { x: x, y: 12, 'text-anchor': 'middle' }, Math.abs(i / 10));
  } else {
    add(rx, 'line', { x1: x, x2: x, y1: half ? 5 : 7, y2: half ? 10 : 8 });
  }
  if (i > 70) continue;
  if (major) {
    add(ry, 'line', { x1: 0, x2: 6, y1: y, y2: y });
    add(ry, 'text', { x: 6, y: y + 4 }, Math.abs(i / 10));
  } else {
    add(ry, 'line', { y1: y, y2: y, x1: half ? 4 : 6, x2: half ? 10 : 8 });
  }
}

// design: four satin columns, coordinates in window space
const design = add(document.getElementById('canvas'), 'g', { transform: 'translate(-20 -132)', 'shape-rendering': 'crispEdges', fill: 'none' });
const TOP = 236, PITCH = 8.52, ROWS = 69;
const columns = [[111, 257], [304, 450], [497, 644], [691, 837]];
const ROW_SHIFT = [7, 0, -6, -6, 0];
const SLANT_SHIFT = [3, -3, -10, -3, 3];
let flat = '', slant = '', ends = '', dots = '';
const dot = (x, y) => { dots += `M${Math.round(x) - 1} ${Math.floor(y) + 0.5}h2M${Math.round(x) + 0.5} ${Math.floor(y)}v2`; };
columns.forEach(([l, r], c) => {
  for (let k = 0; k <= ROWS; k++) {
    const y = Math.round(TOP + k * PITCH) + 0.5;
    flat += `M${l} ${y}H${r}`;
    dot(l, y); dot(r, y);
    if (k < ROWS) {
      slant += c === 0 ? `M${r} ${y}L${l} ${y + PITCH}` : `M${l} ${y}L${r} ${y + PITCH}`;
      if (k % 3 !== 1) ends += c === 0 ? `M${r - 28} ${y}h18` : `M${l + 9} ${y}h17`;
      if (k % 3 !== 0) ends += c === 0 ? `M${l + 9} ${y}h15` : `M${r - 26} ${y}h16`;
    }
    const slope = x => y + (x - l) / (r - l) * PITCH;
    if (c === 1) {
      const first = ((26 - 6.5 * (k - 2)) % 32.5 + 32.5) % 32.5;
      for (let j = 0; j < 5; j++) {
        const a = first + j * 32.5;
        const b = (first + 19.5) % 32.5 + j * 32.5;
        if (a < 144) dot(l + a, y);
        if (k < ROWS && b < 144) dot(l + b, slope(l + b));
      }
    }
    if (c === 2) {
      for (const x of [539, 572, 605]) {
        dot(x + ROW_SHIFT[k % 5], y);
        if (k < ROWS) dot(x + SLANT_SHIFT[k % 5], slope(x + SLANT_SHIFT[k % 5]));
      }
      dot(504 + Math.max(0, ROW_SHIFT[k % 5]), y);
      dot(637 + Math.min(0, ROW_SHIFT[k % 5]), y);
      if (k < ROWS) { dot(508, slope(508)); dot(633, slope(633)); }
    }
    if (c === 3) {
      for (const x of [729, 767, 805]) { dot(x, y); if (k < ROWS) dot(x, slope(x)); }
    }
  }
});
add(design, 'path', { d: flat + slant, stroke: '#300000', 'stroke-width': 3 });
add(design, 'path', { d: flat + slant, stroke: '#8c2020' });
add(design, 'path', { d: ends, stroke: '#cc1818' });
add(design, 'path', { d: 'M260 824L303 244M305 815L497 244M501 815L690 244', stroke: '#902424', 'stroke-dasharray': '4 3' });
add(design, 'path', { d: dots, stroke: '#fff' });
add(design, 'path', { d: 'M111.500 132V990M20 238.500H1040', stroke: '#fff', 'stroke-dasharray': '1 1' });
const gate = add(design, 'g', { transform: 'translate(676 810)', 'shape-rendering': 'auto' });
add(gate, 'path', { d: 'M5 6L1 19h2L5 9l2 10h2L6 6M27 6l-4 13h2l2-10 2 10h2L28 6', stroke: '#ddd' });
add(gate, 'path', { d: 'M.5.5h31v5H.5z', fill: '#ffee50', stroke: '#ddd' });
add(gate, 'path', { d: 'M3 1l4 4M11 1l4 4M18 1l4 4M25 1l4 4', stroke: '#000', 'stroke-width': 3 });

// overview thumbnail
const map = document.getElementById('mapview');
let dim = '', bright = '';
[[2, 53], [72, 52], [140, 53], [208, 54]].forEach(([x, w], c) => {
  for (let i = 0; i < 70; i++) {
    const y = 1 + i * 3 + 0.5;
    dim += `M${x} ${y}h${w}`;
    const wave = c === 0 || c === 3 ? 0 : Math.abs(((i * (c === 1 ? 7 : 5)) % 24) - 12);
    const sway = c === 1 || c === 2 ? Math.round(5 * Math.sin(i / 6)) : 0;
    bright += `M${x + 9 + wave / 2 + sway} ${y + 1}h${w - 18 - wave}`;
    bright += `M${x + 26} ${y + 2}h${14 - wave / 2}`;
    if (i % 2) bright += `M${x + 9 + sway} ${y}h${16 + wave}`;
    else bright += `M${x + 26} ${y}h${16}`;
  }
});
add(map, 'path', { d: dim, stroke: '#781414', 'shape-rendering': 'crispEdges' });
add(map, 'path', { d: bright, stroke: '#a80c0c', 'shape-rendering': 'crispEdges' });
```
